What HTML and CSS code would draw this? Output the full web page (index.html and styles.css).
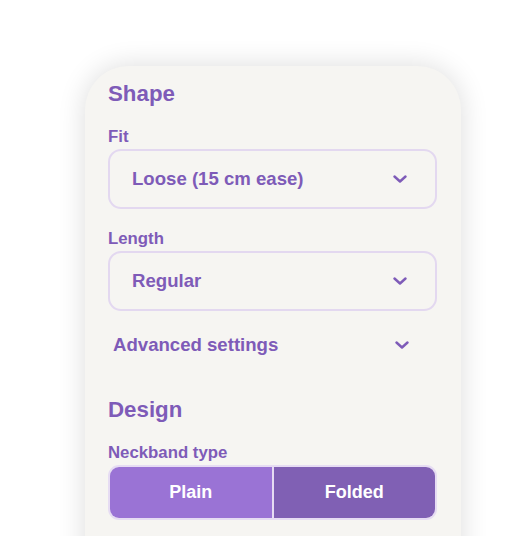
FILE: index.html
```html
<!DOCTYPE html>
<html>
<head>
<meta charset="utf-8">
<link rel="stylesheet" href="styles.css">
</head>
<body>
<div class="card">
  <h2 class="heading">Shape</h2>
  <div class="field">
    <div class="label">Fit</div>
    <div class="select"><span>Loose (15 cm ease)</span>
      <svg class="chev" viewBox="0 0 14 8"><path d="M1.5 1.5 L7 6.5 L12.5 1.5"/></svg>
    </div>
  </div>
  <div class="field">
    <div class="label">Length</div>
    <div class="select"><span>Regular</span>
      <svg class="chev" viewBox="0 0 14 8"><path d="M1.5 1.5 L7 6.5 L12.5 1.5"/></svg>
    </div>
  </div>
  <div class="advanced"><span>Advanced settings</span>
    <svg class="chev" viewBox="0 0 14 8"><path d="M1.5 1.5 L7 6.5 L12.5 1.5"/></svg>
  </div>
  <h2 class="heading design">Design</h2>
  <div class="label">Neckband type</div>
  <div class="segmented">
    <div class="seg seg-plain">Plain</div>
    <div class="seg seg-folded">Folded</div>
  </div>
</div>
</body>
</html>
```
FILE: styles.css
```css
html, body {
  margin: 0;
  padding: 0;
  background: #ffffff;
  font-family: "Liberation Sans", Arial, sans-serif;
  overflow: hidden;
}
.card {
  box-sizing: border-box;
  width: 376px;
  min-height: 500px;
  margin: 66px 0 0 85px;
  padding: 15px 24px 0 23px;
  background: #f6f5f2;
  border-radius: 44px 44px 0 0;
  box-shadow: 0 0 28px rgba(0, 0, 0, 0.14);
  color: #7e5bb8;
}
.heading {
  margin: 0;
  font-size: 22.3px;
  line-height: 26px;
  font-weight: 700;
}
.label {
  margin: 20px 0 2px;
  font-size: 16.8px;
  line-height: 20px;
  font-weight: 700;
}
.field + .field .label {
  margin-top: 20px;
}
.select {
  box-sizing: border-box;
  height: 60px;
  display: flex;
  align-items: center;
  justify-content: space-between;
  padding: 0 28px 0 22px;
  border: 2px solid #e3d8f0;
  border-radius: 13px;
  font-size: 18.6px;
  font-weight: 700;
}
.chev {
  width: 14px;
  height: 8px;
  fill: none;
  stroke: #7e5bb8;
  stroke-width: 2.4;
  stroke-linecap: round;
  stroke-linejoin: round;
}
.advanced {
  display: flex;
  align-items: center;
  justify-content: space-between;
  margin-top: 23px;
  padding: 0 28px 0 5px;
  font-size: 18.6px;
  line-height: 22px;
  font-weight: 700;
}
.design {
  margin-top: 41px;
}
.segmented {
  display: flex;
  height: 55px;
  box-sizing: border-box;
  border: 2px solid #e6dcf3;
  border-radius: 11px;
  overflow: hidden;
  margin-top: 0;
}
.seg {
  flex: 1;
  display: flex;
  align-items: center;
  justify-content: center;
  color: #ffffff;
  font-size: 18px;
  font-weight: 700;
}
.seg-plain {
  background: #9a73d5;
  border-right: 2px solid #e6dcf3;
}
.seg-folded {
  background: #8060b4;
}
```
